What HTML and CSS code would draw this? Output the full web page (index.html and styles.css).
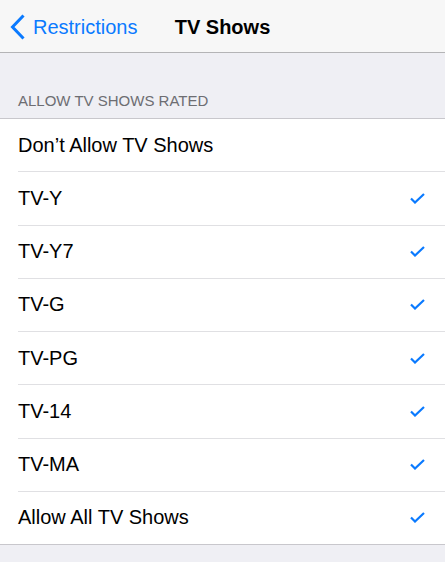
FILE: index.html
```html
<!DOCTYPE html>
<html>
<head>
<meta charset="utf-8">
<link rel="stylesheet" href="styles.css">
</head>
<body>
<div class="nav">
  <div class="back">
    <svg class="chev" width="16" height="26" viewBox="0 0 16 26"><path d="M13.5 1.5 L2.5 13 L13.5 24.5" fill="none" stroke="#0a7aff" stroke-width="3" stroke-linecap="butt" stroke-linejoin="miter"/></svg>
    <span>Restrictions</span>
  </div>
  <div class="title">TV Shows</div>
</div>
<div class="section-header">ALLOW TV SHOWS RATED</div>
<div class="group">
  <div class="row"><span>Don’t Allow TV Shows</span></div>
  <div class="row"><span>TV-Y</span><svg class="check" width="15" height="11" viewBox="0 0 15 11"><path d="M1 5.5 L5 9.5 L14 1" fill="none" stroke="#0a7aff" stroke-width="2.2"/></svg></div>
  <div class="row"><span>TV-Y7</span><svg class="check" width="15" height="11" viewBox="0 0 15 11"><path d="M1 5.5 L5 9.5 L14 1" fill="none" stroke="#0a7aff" stroke-width="2.2"/></svg></div>
  <div class="row"><span>TV-G</span><svg class="check" width="15" height="11" viewBox="0 0 15 11"><path d="M1 5.5 L5 9.5 L14 1" fill="none" stroke="#0a7aff" stroke-width="2.2"/></svg></div>
  <div class="row"><span>TV-PG</span><svg class="check" width="15" height="11" viewBox="0 0 15 11"><path d="M1 5.5 L5 9.5 L14 1" fill="none" stroke="#0a7aff" stroke-width="2.2"/></svg></div>
  <div class="row"><span>TV-14</span><svg class="check" width="15" height="11" viewBox="0 0 15 11"><path d="M1 5.5 L5 9.5 L14 1" fill="none" stroke="#0a7aff" stroke-width="2.2"/></svg></div>
  <div class="row"><span>TV-MA</span><svg class="check" width="15" height="11" viewBox="0 0 15 11"><path d="M1 5.5 L5 9.5 L14 1" fill="none" stroke="#0a7aff" stroke-width="2.2"/></svg></div>
  <div class="row"><span>Allow All TV Shows</span><svg class="check" width="15" height="11" viewBox="0 0 15 11"><path d="M1 5.5 L5 9.5 L14 1" fill="none" stroke="#0a7aff" stroke-width="2.2"/></svg></div>
</div>
</body>
</html>
```
FILE: styles.css
```css
html, body {
  margin: 0;
  padding: 0;
  background: #efeff4;
  font-family: "Liberation Sans", Arial, sans-serif;
  height: 562px;
  overflow: hidden;
}
.nav {
  height: 53px;
  background: #f7f7f7;
  border-bottom: 1px solid #b4b4b6;
  box-sizing: border-box;
  display: flex;
  align-items: center;
  position: relative;
  padding-top: 2px;
}
.back {
  display: flex;
  align-items: center;
  padding-left: 10px;
  color: #0a7aff;
  font-size: 20px;
  gap: 7px;
}
.chev { display: block; margin-top: -1px; }
.title {
  position: absolute;
  left: 0;
  right: 0;
  text-align: center;
  font-size: 20px;
  font-weight: bold;
  color: #000;
  pointer-events: none;
}
.section-header {
  padding: 0 18px;
  height: 65px;
  box-sizing: border-box;
  font-size: 15px;
  color: #6d6d72;
  line-height: 16px;
  padding-top: 40px;
}
.group {
  background: #fff;
  border-top: 1px solid #c8c7cc;
  border-bottom: 1px solid #c8c7cc;
}
.row {
  height: 52.25px;
  margin-left: 18px;
  padding-right: 20px;
  display: flex;
  align-items: center;
  justify-content: space-between;
  font-size: 20px;
  color: #000;
  border-bottom: 1px solid #e0e0e3;
}
.row:last-child { border-bottom: none; }
.check { display: block; }
```
